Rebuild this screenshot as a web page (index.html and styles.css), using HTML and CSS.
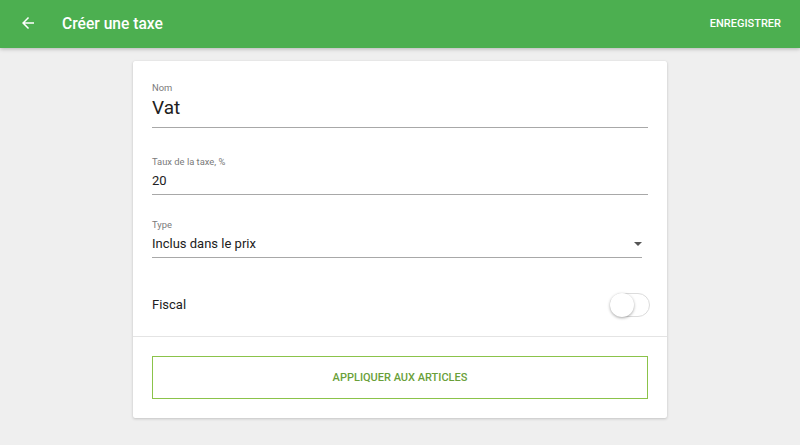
FILE: index.html
```html
<!DOCTYPE html>
<html lang="fr">
<head>
<meta charset="utf-8">
<title>Créer une taxe</title>
<link rel="stylesheet" href="styles.css">
</head>
<body>
<header class="appbar">
  <button class="back" aria-label="Retour">
    <svg viewBox="0 0 24 24" width="18" height="18"><path fill="#fff" d="M20 11H7.83l5.59-5.59L12 4l-8 8 8 8 1.41-1.41L7.83 13H20v-2z"/></svg>
  </button>
  <h1 class="title">Créer une taxe</h1>
  <span class="spacer"></span>
  <button class="save">ENREGISTRER</button>
</header>
<main class="content">
  <section class="card">
    <div class="fields">
      <div class="field field-name">
        <label class="label">Nom</label>
        <div class="value value-lg">Vat</div>
      </div>
      <div class="field field-rate">
        <label class="label">Taux de la taxe, %</label>
        <div class="value">20</div>
      </div>
      <div class="field field-type">
        <label class="label">Type</label>
        <div class="value select">
          <span>Inclus dans le prix</span>
          <span class="caret"></span>
        </div>
      </div>
      <div class="toggle-row">
        <span class="toggle-label">Fiscal</span>
        <span class="switch"><span class="thumb"></span></span>
      </div>
    </div>
    <div class="actions">
      <button class="outline-btn">APPLIQUER AUX ARTICLES</button>
    </div>
  </section>
</main>
</body>
</html>
```
FILE: styles.css
```css
* { box-sizing: border-box; }
html, body { margin: 0; padding: 0; }
body {
  background: #efefef;
  font-family: Roboto, "Noto Sans", Arial, sans-serif;
  color: #212121;
  width: 800px;
  height: 445px;
  overflow: hidden;
}
.appbar {
  height: 48px;
  background: #4caf50;
  display: flex;
  align-items: center;
  padding: 0 19px 0 19px;
  box-shadow: 0 1px 4px rgba(0,0,0,0.25);
  position: relative;
}
.back {
  background: none;
  border: 0;
  padding: 0;
  width: 18px;
  height: 18px;
  display: flex;
  margin-top: -2px;
}
.title {
  margin: 0 0 0 25px;
  font-size: 15.6px;
  font-weight: 500;
  color: #fff;
  line-height: 20px;
  margin-top: -1px;
}
.spacer { flex: 1; }
.save {
  background: none;
  border: 0;
  padding: 0;
  color: #fff;
  font-family: inherit;
  font-size: 11px;
  font-weight: 500;
  margin-top: -1px;
}
.content {
  padding-top: 13px;
  display: flex;
  justify-content: center;
}
.card {
  width: 534px;
  background: #fff;
  border-radius: 2px;
  box-shadow: 0 1px 3px rgba(0,0,0,0.18), 0 0 1px rgba(0,0,0,0.08);
}
.fields {
  padding: 21px 19px 0 19px;
}
.field {
  border-bottom: 1px solid #a8a8a8;
  display: flex;
  flex-direction: column;
}
.label {
  font-size: 9.4px;
  line-height: 11px;
  color: #7a7a7a;
}
.value {
  font-size: 13px;
  line-height: 18px;
  color: #212121;
  margin-top: 5px;
  padding-bottom: 4px;
}
.value-lg {
  font-size: 19px;
  line-height: 24px;
  margin-top: 3px;
  padding-bottom: 7px;
}
.field-rate { margin-top: 28px; }
.field-type { margin-top: 24px; margin-right: 6px; }
.select {
  display: flex;
  justify-content: space-between;
  align-items: center;
}
.caret {
  width: 0;
  height: 0;
  border-left: 4px solid transparent;
  border-right: 4px solid transparent;
  border-top: 4px solid #555;
  margin-right: 0;
}
.toggle-row {
  display: flex;
  justify-content: space-between;
  align-items: center;
  padding: 35px 0 19px 0;
}
.toggle-label {
  font-size: 13px;
  line-height: 18px;
}
.switch {
  width: 40px;
  height: 24px;
  border: 1px solid #dcdcdc;
  border-radius: 12px;
  background: #fff;
  position: relative;
  display: block;
  margin-right: -2px;
}
.thumb {
  position: absolute;
  left: -1px;
  top: -1px;
  width: 24px;
  height: 24px;
  border-radius: 50%;
  background: #fff;
  box-shadow: 0 1px 3px rgba(0,0,0,0.35);
}
.actions {
  border-top: 1px solid #e4e4e4;
  padding: 19px 19px 19px 19px;
}
.outline-btn {
  width: 100%;
  height: 43px;
  background: #fff;
  border: 1px solid #8bc34a;
  border-radius: 0;
  color: #6a9f3a;
  font-family: inherit;
  font-size: 11px;
  font-weight: 500;
  display: block;
}
```
